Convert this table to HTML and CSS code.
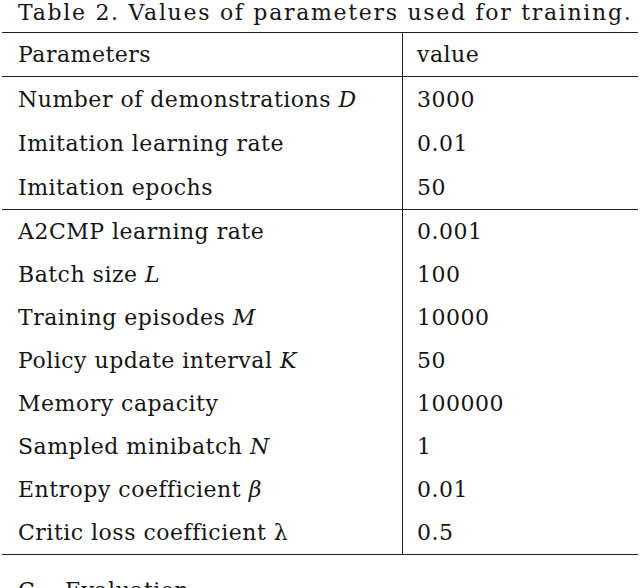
FILE: index.html
```html
<!DOCTYPE html>
<html>
<head>
<meta charset="utf-8">
<link rel="stylesheet" href="styles.css">
</head>
<body>
<p class="caption">Table 2. Values of parameters used for training.</p>
<table class="params">
  <thead>
    <tr><th>Parameters</th><th>value</th></tr>
  </thead>
  <tbody class="first">
    <tr><td>Number of demonstrations <i>D</i></td><td>3000</td></tr>
    <tr><td>Imitation learning rate</td><td>0.01</td></tr>
    <tr><td>Imitation epochs</td><td>50</td></tr>
  </tbody>
  <tbody class="group">
    <tr><td>A2CMP learning rate</td><td>0.001</td></tr>
    <tr><td>Batch size <i>L</i></td><td>100</td></tr>
    <tr><td>Training episodes <i>M</i></td><td>10000</td></tr>
    <tr><td>Policy update interval <i>K</i></td><td>50</td></tr>
    <tr><td>Memory capacity</td><td>100000</td></tr>
    <tr><td>Sampled minibatch <i>N</i></td><td>1</td></tr>
    <tr><td>Entropy coefficient <i>β</i></td><td>0.01</td></tr>
    <tr><td>Critic loss coefficient λ</td><td>0.5</td></tr>
  </tbody>
</table>
<h3 class="section"><span class="num">C.</span>Evaluation</h3>
</body>
</html>
```
FILE: styles.css
```css
html, body {
  margin: 0;
  padding: 0;
  background: #fff;
}
body {
  font-family: "DejaVu Serif", "Liberation Serif", serif;
  color: #151515;
  font-size: 22px;
  width: 640px;
  height: 588px;
  overflow: hidden;
}
.caption {
  margin: 0;
  padding-left: 18px;
  font-size: 22px;
  letter-spacing: 1.7px;
  line-height: 26px;
  height: 32px;
  white-space: nowrap;
}
.params {
  margin-left: 2px;
  width: 636px;
  border-collapse: collapse;
  border-top: 1px solid #222;
  border-bottom: 1px solid #222;
}
.params th,
.params td {
  font-weight: normal;
  text-align: left;
  padding: 0 0 0 16px;
  height: 43px;
  letter-spacing: 0.5px;
  white-space: nowrap;
}
.params .first td {
  height: 44px;
}
.params th:first-child,
.params td:first-child {
  width: 384px;
  border-right: 1px solid #222;
}
.params th:last-child,
.params td:last-child {
  padding-left: 14px;
}
.params thead tr {
  border-bottom: 1px solid #222;
}
.params .group {
  border-top: 1px solid #222;
}
.params i {
  font-style: italic;
}
.section {
  margin: 0;
  padding: 23px 0 0 18px;
  font-weight: normal;
  font-size: 22px;
  letter-spacing: 0.5px;
}
.section .num {
  display: inline-block;
  width: 47px;
}
```
